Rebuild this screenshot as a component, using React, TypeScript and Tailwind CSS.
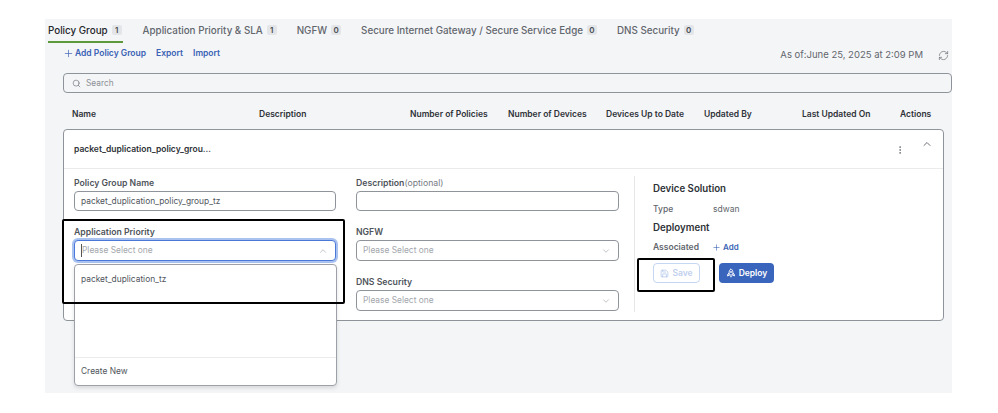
import { ChevronDown, ChevronUp, EllipsisVertical, Plus, RefreshCw, Save, Search } from "lucide-react";

const tabs = [
  { label: "Policy Group", n: 1, active: true },
  { label: "Application Priority & SLA", n: 1 },
  { label: "NGFW", n: 0 },
  { label: "Secure Internet Gateway / Secure Service Edge", n: 0 },
  { label: "DNS Security", n: 0 },
];

const cols = ["Name", "Description", "Number of Policies", "Number of Devices", "Devices Up to Date", "Updated By", "Last Updated On", "Actions"];

function Label({ children }: { children: React.ReactNode }) {
  return <div className="h-[14px] text-[8.7px] leading-[14px] font-semibold text-[#50555c]">{children}</div>;
}

function Select({ open }: { open?: boolean }) {
  return (
    <div
      className={
        open
          ? "mt-[1px] flex h-[21px] items-center justify-between rounded-[4px] border border-[#4a78d8] bg-white pr-[7px] pl-[6px] shadow-[0_0_0_2px_#a9c2f0]"
          : "mt-[1px] flex h-[21px] items-center justify-between rounded-[4px] border border-[#8f949b] bg-white pr-[7px] pl-[6px]"
      }
    >
      <span className={open ? "border-l border-[#555] text-[8.4px] text-[#a3a7ad]" : "text-[8.4px] text-[#a3a7ad]"}>Please Select one</span>
      {open ? <ChevronUp size={10} className="text-[#b5b9be]" /> : <ChevronDown size={10} className="text-[#b5b9be]" />}
    </div>
  );
}

function UprightRocket() {
  return (
    <svg width="10" height="10" viewBox="0 0 12 12" fill="none" stroke="currentColor" strokeWidth="1.2" strokeLinejoin="round">
      <path d="M6 1 C7.8 2.4 8.3 4.2 8.3 5.6 L8.3 8.4 L3.7 8.4 L3.7 5.6 C3.7 4.2 4.2 2.4 6 1 Z" />
      <path d="M3.7 6 L2 7.8 L2 9.6 L3.7 8.4" />
      <path d="M8.3 6 L10 7.8 L10 9.6 L8.3 8.4" />
      <path d="M5 10.4 L7 10.4" />
      <circle cx="6" cy="4.8" r="0.7" />
    </svg>
  );
}

export default function App() {
  return (
    <div className="relative h-[413px] w-[998px] overflow-hidden bg-white font-['Inter',sans-serif]">
      <div className="relative mt-[19px] ml-[45px] h-[374px] w-[907px] bg-[#f4f5f7] pt-[4px]">
        {/* Tabs */}
        <div className="flex h-[20px] items-start gap-[20px] pl-[3px]">
          {tabs.map((t) => (
            <div
              key={t.label}
              className={
                t.active
                  ? "flex h-[20px] items-start gap-[4px] border-b-2 border-[#5c9a3c] pr-[1px] text-[9.8px] leading-[15px] font-medium whitespace-nowrap text-[#23262b]"
                  : "flex h-[20px] items-start gap-[4px] text-[9.8px] leading-[15px] font-medium whitespace-nowrap text-[#62666d]"
              }
            >
              <span>{t.label}</span>
              <span className="mt-[2px] flex h-[10px] w-[10px] items-center justify-center rounded-[2px] bg-[#e3e5e8] text-[8px] font-semibold text-[#4a4e55]">
                {t.n}
              </span>
            </div>
          ))}
        </div>

        {/* Action row */}
        <div className="flex h-[30px] items-start justify-between pt-[4px] pr-[3px] pl-[18px]">
          <div className="flex items-center text-[8.5px] leading-[12px] font-semibold text-[#3a62b5]">
            <Plus size={11} strokeWidth={1.5} className="mr-[1px]" />
            <span>Add Policy Group</span>
            <span className="ml-[10px]">Export</span>
            <span className="ml-[10px]">Import</span>
          </div>
          <div className="mt-[2px] flex items-center gap-[15px] text-[9.5px] leading-[12px] text-[#62666d]">
            <span>As of:June 25, 2025 at 2:09 PM</span>
            <RefreshCw size={11} strokeWidth={1.4} />
          </div>
        </div>

        {/* Search */}
        <div className="ml-[18px] flex h-[20px] items-center gap-[5px] rounded-[4px] border border-[#8f949b] bg-[#f4f5f7] pl-[8px]">
          <Search size={9} strokeWidth={1.6} className="text-[#5f646b]" />
          <span className="text-[8.3px] text-[#8b8f95]">Search</span>
        </div>

        {/* Table head */}
        <div className="mt-[14px] grid h-[22px] grid-cols-[187px_151px_98px_98px_98px_98px_98px_60px] pl-[27px] text-[8.5px] leading-[14px] font-semibold text-[#2e3237]">
          {cols.map((c) => (
            <div key={c}>{c}</div>
          ))}
        </div>

        {/* Card */}
        <div className="ml-[18px] h-[192px] w-[881px] rounded-[4px] border border-[#8f949b] bg-white">
          <div className="flex h-[39px] items-center justify-between border-b border-[#e9ebed] pr-[10px] pl-[10px]">
            <span className="text-[8.5px] font-semibold text-[#2e3237]">packet_duplication_policy_grou...</span>
            <div className="flex items-start gap-[16px]">
              <EllipsisVertical size={10} className="mt-[1px] text-[#6c7076]" />
              <ChevronUp size={12} className="-mt-[6px] text-[#6c7076]" />
            </div>
          </div>
          <div className="flex pt-[7px] pl-[10px]">
            <div className="w-[262px]">
              <Label>Policy Group Name</Label>
              <div className="mt-[1px] flex h-[20px] items-center rounded-[4px] border border-[#8f949b] bg-white pl-[6px] text-[8.4px] text-[#50555c]">
                packet_duplication_policy_group_tz
              </div>
              <div className="mt-[14px]">
                <Label>Application Priority</Label>
                <Select open />
              </div>
            </div>
            <div className="ml-[20px] w-[263px]">
              <div className="h-[14px] text-[8.7px] leading-[14px] font-semibold text-[#50555c]">
                Description<span className="font-normal text-[#777b82]">(optional)</span>
              </div>
              <div className="mt-[1px] h-[20px] rounded-[4px] border border-[#8f949b] bg-white" />
              <div className="mt-[14px]">
                <Label>NGFW</Label>
                <Select />
              </div>
              <div className="mt-[14px]">
                <Label>DNS Security</Label>
                <Select />
              </div>
            </div>
            <div className="ml-[15px] h-[136px] w-[280px] border-l border-[#e4e6e8] pt-[6px] pl-[18px]">
              <div className="text-[9.7px] leading-[14px] font-semibold text-[#2e3237]">Device Solution</div>
              <div className="mt-[7px] flex text-[8.5px] leading-[12px] text-[#62666d]">
                <span className="w-[60px] font-medium">Type</span>
                <span>sdwan</span>
              </div>
              <div className="mt-[6px] text-[9.7px] leading-[14px] font-semibold text-[#2e3237]">Deployment</div>
              <div className="mt-[6px] flex items-center text-[8.5px] leading-[12px] font-semibold text-[#62666d]">
                <span>Associated</span>
                <Plus size={9} strokeWidth={1.6} className="ml-[13px] text-[#3a62b5]" />
                <span className="ml-[2px] text-[8px] text-[#3a62b5]">Add</span>
              </div>
              <div className="mt-[10px] flex gap-[19px]">
                <div className="flex h-[20px] w-[47px] items-center justify-center gap-[3px] rounded-[4px] border border-[#c5d6f3] text-[8.5px] font-semibold text-[#c0d0ee]">
                  <Save size={9} strokeWidth={1.8} className="text-[#a9c0e8]" />
                  Save
                </div>
                <div className="flex h-[20px] w-[55px] items-center justify-center gap-[3px] rounded-[4px] bg-[#3a65bd] text-[8.5px] font-semibold text-white">
                  <UprightRocket />
                  Deploy
                </div>
              </div>
            </div>
          </div>
        </div>

        {/* Dropdown menu */}
        <div className="absolute top-[245px] left-[29px] flex h-[122px] w-[263px] flex-col rounded-[4px] border border-[#9da1a7] bg-white shadow-[0_2px_4px_rgba(0,0,0,0.12)]">
          <div className="flex-1 pt-[8px] pl-[6px] text-[8.4px] leading-[12px] text-[#50555c]">packet_duplication_tz</div>
          <div className="flex h-[28px] items-center border-t border-[#e9ebed] pl-[6px] text-[8.4px] text-[#50555c]">Create New</div>
        </div>

        {/* Annotation boxes */}
        <div className="absolute top-[200px] left-[17px] h-[85px] w-[283px] rounded-[2px] border-2 border-black" />
        <div className="absolute top-[239px] left-[592px] h-[34px] w-[78px] rounded-[2px] border-2 border-black" />
      </div>
    </div>
  );
}
